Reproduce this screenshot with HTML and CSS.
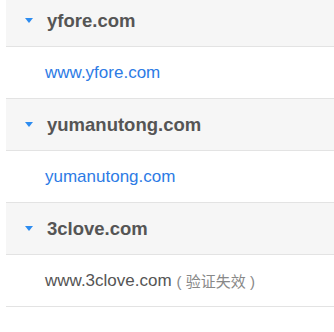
FILE: index.html
```html
<!DOCTYPE html>
<html lang="zh-CN">
<head>
    <meta charset="UTF-8">
    <title>Domains</title>
    <link rel="stylesheet" href="styles.css">
</head>
<body>
    <div class="domain-list">
        <div class="group">
            <div class="group-title"><span class="caret"></span>yfore.com</div>
            <div class="item"><a href="#">www.yfore.com</a></div>
        </div>
        <div class="group">
            <div class="group-title"><span class="caret"></span>yumanutong.com</div>
            <div class="item"><a href="#">yumanutong.com</a></div>
        </div>
        <div class="group">
            <div class="group-title"><span class="caret"></span>3clove.com</div>
            <div class="item">www.3clove.com<span class="status">( 验证失效 )</span></div>
        </div>
    </div>
</body>
</html>
```

FILE: styles.css
```css
body {
    margin: 0;
    font-family: "Liberation Sans", Arial, "Noto Sans CJK SC", sans-serif;
    background-color: #fff;
    color: #555;
}
.domain-list {
    margin: -5px 0 0 6px;
}
.group-title {
    display: flex;
    align-items: center;
    height: 51px;
    border-bottom: 1px solid #e3e3e3;
    background-color: #f6f6f6;
    font-size: 18.5px;
    font-weight: bold;
    color: #555;
}
.caret {
    width: 0;
    height: 0;
    margin: 0 14px 0 19px;
    border-left: 4px solid transparent;
    border-right: 4px solid transparent;
    border-top: 5px solid #2d8cf0;
}
.item {
    display: flex;
    align-items: center;
    height: 51px;
    padding-left: 39px;
    border-bottom: 1px solid #e3e3e3;
    font-size: 17px;
    color: #555;
}
.item a {
    color: #2d7be5;
    text-decoration: none;
}
.status {
    margin-left: 5px;
    font-size: 15px;
    color: #888;
}
```
